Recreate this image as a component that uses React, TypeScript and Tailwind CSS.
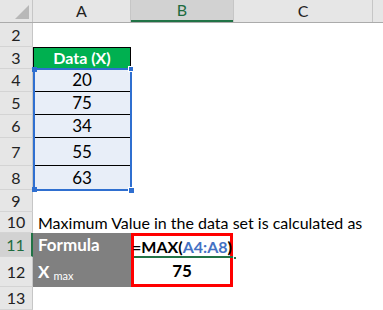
const FONT = { fontFamily: 'Lato, "Open Sans", sans-serif' };

const ROWS = [
  { n: 2, h: 'h-[24px]' },
  { n: 3, h: 'h-[22px]' },
  { n: 4, h: 'h-[23px]' },
  { n: 5, h: 'h-[23px]' },
  { n: 6, h: 'h-[23px]' },
  { n: 7, h: 'h-[28px]' },
  { n: 8, h: 'h-[24px]' },
  { n: 9, h: 'h-[22px]' },
  { n: 10, h: 'h-[21px]' },
  { n: 11, h: 'h-[24px]' },
  { n: 12, h: 'h-[30px]' },
  { n: 13, h: 'h-[23px]' },
];

const DATA: Record<number, string> = { 4: '20', 5: '75', 6: '34', 7: '55', 8: '63' };

function RowBody({ n }: { n: number }) {
  if (n === 3) {
    return (
      <div className="flex h-full">
        <div className="w-[98px] h-full bg-[#00b050] border border-black flex items-center justify-center text-white font-bold text-[16px]">
          Data (X)
        </div>
      </div>
    );
  }
  if (DATA[n]) {
    return (
      <div className="flex h-full">
        <div
          className={`w-[98px] h-full bg-[#e8eef8] flex items-center justify-center text-[17px] text-black ${
            n < 8 ? 'border-b border-black' : ''
          }`}
        >
          {DATA[n]}
        </div>
      </div>
    );
  }
  if (n === 10) {
    return (
      <div className="h-full flex items-center pl-[5px] text-[16px] text-black whitespace-nowrap">
        Maximum Value in the data set is calculated as
      </div>
    );
  }
  if (n === 11) {
    return (
      <div className="flex h-full">
        <div className="w-[98px] h-full bg-[#808080] flex items-center pl-[5px] text-white font-bold text-[17px]">
          Formula
        </div>
        <div className="relative w-[102px] h-full border-t-[3px] border-x-[3px] border-[#ff0000] flex items-center justify-center font-bold text-[16px] text-black">
          <span>
            =MAX(<span className="text-[#4472c4]">A4:A8</span>)
          </span>
          <div className="absolute left-0 right-[-4px] bottom-[-1px] h-[2px] bg-[#217346]" />
          <div className="absolute right-[-7px] bottom-[-3px] w-[4px] h-[4px] bg-[#217346] border border-white" />
        </div>
      </div>
    );
  }
  if (n === 12) {
    return (
      <div className="flex h-full">
        <div className="w-[98px] h-full bg-[#808080] flex items-center pl-[5px] text-white font-bold text-[17px]">
          X<sub className="text-[11px] font-normal ml-[4px] relative top-[4px]">max</sub>
        </div>
        <div className="w-[102px] h-full border-b-[3px] border-x-[3px] border-[#ff0000] flex items-center justify-center font-bold text-[17px] text-black">
          75
        </div>
      </div>
    );
  }
  return null;
}

export default function App() {
  return (
    <div className="w-[383px] h-[310px] bg-white overflow-hidden relative" style={FONT}>
      {/* Column headers */}
      <div className="flex h-[23px] bg-[#e6e6e6] border-b border-[#ababab]">
        <div className="w-[33px] h-full border-r border-[#c6c6c6] relative">
          <div className="absolute right-[3px] bottom-[3px] w-0 h-0 border-l-[14px] border-l-transparent border-b-[14px] border-b-[#b8b8b8]" />
        </div>
        <div className="w-[98px] h-full border-r border-[#c6c6c6] flex items-center justify-center text-[16px] text-[#222]">A</div>
        <div className="w-[102px] h-full bg-[#d2d2d2] border-b-2 border-[#217346] flex items-center justify-center text-[16px] text-[#1e6b3f]">B</div>
        <div className="w-[140px] h-full border-l border-r border-[#c6c6c6] flex items-center justify-center text-[16px] text-[#222]">C</div>
        <div className="flex-1 h-full" />
      </div>

      {ROWS.map(({ n, h }) => (
        <div key={n} className={`flex ${h}`}>
          <div
            className={`w-[33px] h-full flex items-center justify-center text-[16px] border-b border-[#d4d4d4] ${
              n === 11
                ? 'bg-[#d2d2d2] text-[#1e6b3f] border-r-2 border-r-[#217346]'
                : 'bg-[#e6e6e6] text-[#222] border-r border-r-[#c6c6c6]'
            }`}
          >
            {n}
          </div>
          <div className="flex-1 h-full">
            <RowBody n={n} />
          </div>
        </div>
      ))}

      {/* selection outline A4:A8 */}
      <div className="absolute left-[33px] top-[68px] w-[99px] h-[123px] border-2 border-[#2f6fd0] pointer-events-none">
        <div className="absolute left-[-3px] top-[-3px] w-[5px] h-[5px] bg-[#2f6fd0]" />
        <div className="absolute right-[-4px] top-[-4px] w-[6px] h-[6px] bg-[#2f6fd0] border border-white" />
        <div className="absolute left-[-3px] bottom-[-3px] w-[5px] h-[5px] bg-[#2f6fd0]" />
        <div className="absolute right-[-5px] bottom-[-5px] w-[7px] h-[7px] bg-[#2f6fd0] border border-white" />
      </div>
    </div>
  );
}
